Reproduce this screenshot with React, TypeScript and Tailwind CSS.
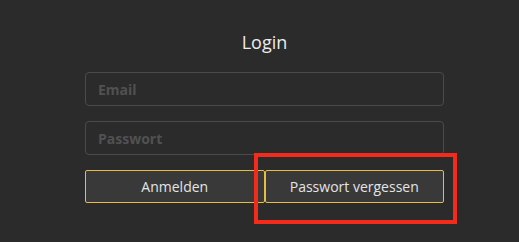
export default function App() {
  return (
    <div className="relative h-[242px] w-[519px] overflow-hidden bg-[#2b2b2b] font-['Open_Sans',sans-serif]">
      <div className="ml-[85px] flex w-[359px] flex-col pt-[28px]">
        <h1 className="text-center text-[18px] leading-[28px] text-[#ececec]">Login</h1>

        <input
          type="text"
          placeholder="Email"
          className="mt-[16px] h-[34px] w-full rounded-[4px] border border-[#4b4b4b] bg-transparent px-[12px] text-[14px] font-bold text-[#ddd] outline-none placeholder:text-[#515151]"
        />
        <input
          type="password"
          placeholder="Passwort"
          className="mt-[15px] h-[34px] w-full rounded-[4px] border border-[#4b4b4b] bg-transparent px-[12px] text-[14px] font-bold text-[#ddd] outline-none placeholder:text-[#515151]"
        />

        <div className="mt-[15px] flex">
          <button className="h-[33px] w-[180px] rounded-[2px] border border-[#e6bd40] bg-[#393939] text-[14px] text-[#e4e4e4]">
            Anmelden
          </button>
          <button className="h-[33px] w-[180px] rounded-[2px] border border-[#e6bd40] bg-[#393939] text-[14px] text-[#e4e4e4]">
            Passwort vergessen
          </button>
        </div>
      </div>

      {/* highlight */}
      <div className="absolute left-[254px] top-[153px] h-[71px] w-[203px] border-4 border-[#f22b1a]" />
    </div>
  );
}
